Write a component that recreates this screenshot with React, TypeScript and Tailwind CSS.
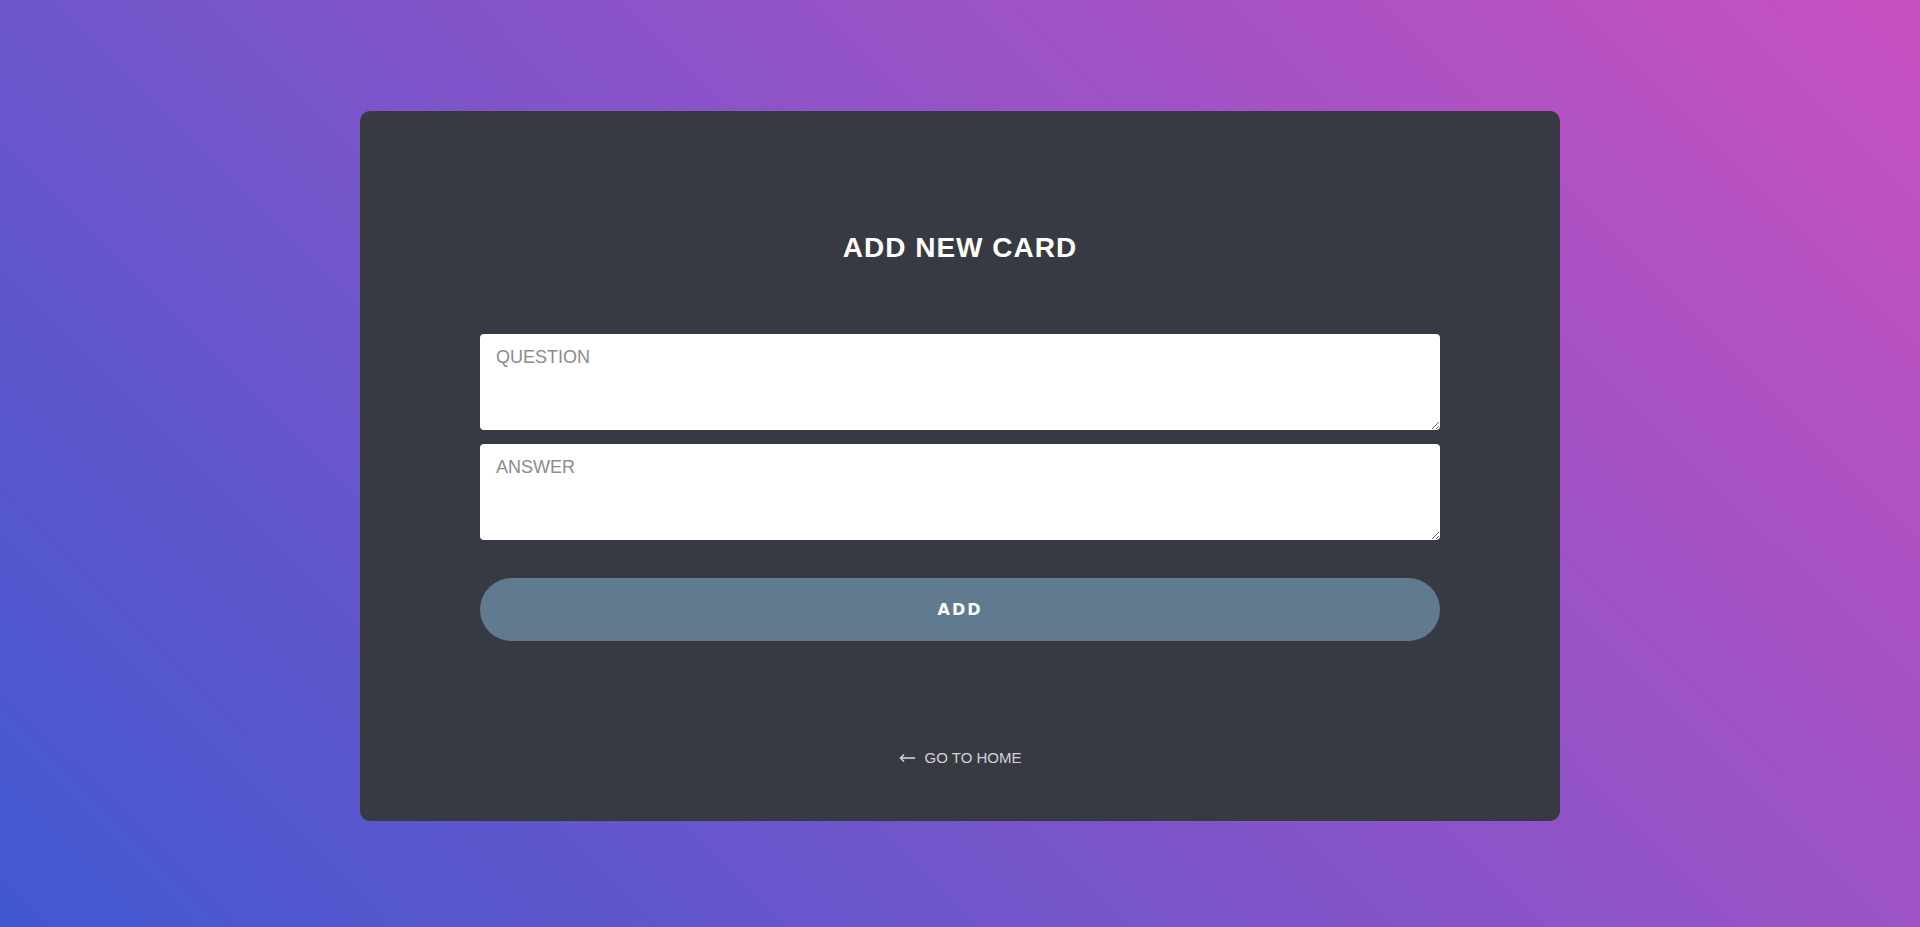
export default function App() {
  return (
    <div className="min-h-[927px] w-full bg-[linear-gradient(45deg,#4158d0,#c850c0)] pt-[111px] font-['Liberation_Sans',Arial,sans-serif]">
      <div className="mx-auto flex w-[1200px] flex-col items-center rounded-[10px] bg-[#373a42] pt-[120px] pb-[51px]">
        <h1 className="text-[28px] leading-[34px] font-bold tracking-[1px] text-white">
          ADD NEW CARD
        </h1>

        <form className="mt-[69px] flex w-[960px] flex-col">
          <textarea
            placeholder="QUESTION"
            className="h-[96px] w-full rounded-[4px] bg-white px-4 pt-[10px] text-[18px] leading-[27px] text-gray-800 outline-none placeholder:text-[#8a8c8f]"
          />
          <textarea
            placeholder="ANSWER"
            className="mt-[14px] h-[96px] w-full rounded-[4px] bg-white px-4 pt-[10px] text-[18px] leading-[27px] text-gray-800 outline-none placeholder:text-[#8a8c8f]"
          />
          <button
            type="button"
            className="mt-[38px] h-[63px] w-full rounded-full bg-[#607b8f] font-['DejaVu_Sans',sans-serif] text-[16px] font-bold tracking-[2px] text-white"
          >
            ADD
          </button>
        </form>

        <a
          href="#"
          className="mt-[105px] flex items-center gap-[10px] text-[15px] leading-[24px] text-[#d2d3d6]"
        >
          <svg width="16" height="10" viewBox="0 0 16 10" fill="none">
            <path d="M16 5H2" stroke="currentColor" strokeWidth="1.6" />
            <path d="M5 1.5L1.5 5L5 8.5" stroke="currentColor" strokeWidth="1.6" />
          </svg>
          GO TO HOME
        </a>
      </div>
    </div>
  );
}
